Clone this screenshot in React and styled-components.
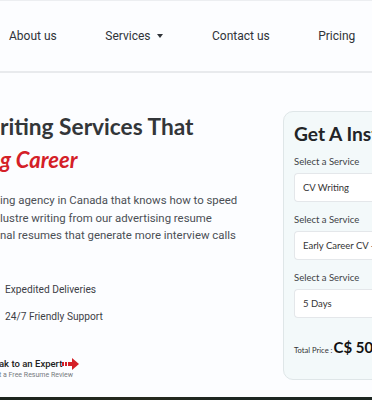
import React from "react";
import styled, { createGlobalStyle } from "styled-components";

const Global = createGlobalStyle`
  html, body { margin: 0; padding: 0; }
  body {
    background: #fcfdff;
    font-family: Roboto, "Liberation Sans", sans-serif;
    overflow: hidden;
  }
`;

const Page = styled.div`
  width: 372px;
  height: 400px;
  overflow: hidden;
  display: flex;
  flex-direction: column;
`;

const Nav = styled.nav`
  flex: none;
  border-top: 1px solid #eceef1;
  border-bottom: 2px solid #e8eaed;
  display: flex;
  align-items: center;
  gap: 48.5px;
  padding-left: 9px;
  box-sizing: border-box;
  height: 73px;
  padding-bottom: 1px;
`;

const NavItem = styled.a`
  font-size: 12px;
  color: #2f3338;
  white-space: nowrap;
  display: flex;
  align-items: center;
  gap: 7px;
`;

const Caret = styled.span`
  width: 0;
  height: 0;
  border-left: 3px solid transparent;
  border-right: 3px solid transparent;
  border-top: 4px solid #2f3338;
`;

const Hero = styled.section`
  flex: 1;
  display: flex;
  overflow: hidden;
`;

const Left = styled.div`
  width: 283px;
  flex: none;
  padding-top: 37px;
  overflow: hidden;
`;

const Title = styled.h1`
  margin: 0;
  font-family: Lato, sans-serif;
  font-weight: 700;
  font-size: 22.7px;
  line-height: 33px;
  color: #333639;
  white-space: nowrap;
`;

const Red = styled.em`
  color: #d42027;
  font-style: italic;
  font-size: 22px;
`;

const Para = styled.p`
  margin: 16px 0 0;
  font-size: 11.4px;
  line-height: 17.5px;
  color: #4b4f55;
  white-space: nowrap;
`;

const List = styled.ul`
  list-style: none;
  margin: 37px 0 0;
  padding: 0 0 0 5px;
  display: flex;
  flex-direction: column;
  gap: 12px;
`;

const ListItem = styled.li`
  font-size: 10.2px;
  line-height: 15px;
  color: #3c4046;
`;

const Cta = styled.div`
  margin-top: 34px;
  display: flex;
  flex-direction: column;
  gap: 1px;
`;

const CtaMain = styled.div`
  display: flex;
  align-items: center;
  font-size: 9.5px;
  font-weight: 500;
  color: #222;
  margin-left: -1px;
`;

const CtaSub = styled.div`
  font-size: 7px;
  color: #777b80;
  margin-left: -1px;
`;

const Card = styled.div`
  margin-top: 38px;
  width: 120px;
  height: 269px;
  flex: none;
  box-sizing: border-box;
  background: #f3f9fa;
  border: 1px solid #dfe6e8;
  border-radius: 10px;
  padding: 9px 0 0 10px;
  font-family: Lato, sans-serif;
`;

const CardTitle = styled.h2`
  margin: 0;
  font-size: 19.2px;
  font-weight: 700;
  color: #222427;
  white-space: nowrap;
  line-height: 26px;
`;

const Label = styled.div`
  margin-top: ${(p) => (p.$first ? "9px" : "12px")};
  font-size: 9.5px;
  color: #3d4145;
  line-height: 12px;
`;

const Field = styled.div`
  margin-top: 5px;
  height: 29px;
  box-sizing: border-box;
  background: #fff;
  border: 1px solid #e4e7ea;
  border-radius: 4px 0 0 4px;
  border-right: none;
  display: flex;
  align-items: center;
  padding-left: 8px;
  font-size: 9.5px;
  color: #333;
  white-space: nowrap;
  overflow: hidden;
`;

const Total = styled.div`
  margin-top: 20px;
  display: flex;
  align-items: baseline;
  gap: 1px;
  white-space: nowrap;
`;

const TotalLabel = styled.span`
  font-size: 7.6px;
  color: #333;
`;

const TotalValue = styled.span`
  font-size: 15px;
  font-weight: 700;
  color: #111;
`;

const Footer = styled.div`
  height: 3px;
  flex: none;
  background: linear-gradient(90deg, #1c241e 0%, #262a1e 40%, #1d2621 60%, #1d2621 100%);
`;

const Arrow = () => (
  <svg width="17" height="12" viewBox="0 0 17 12">
    <rect x="0" y="4" width="2" height="4" fill="#d42027" />
    <rect x="3" y="4" width="2" height="4" fill="#d42027" />
    <rect x="6" y="4" width="5" height="4" fill="#d42027" />
    <path d="M10 0 L17 6 L10 12 Z" fill="#d42027" />
  </svg>
);

export default function App() {
  return (
    <Page>
      <Global />
      <Nav>
        <NavItem>About us</NavItem>
        <NavItem>
          Services <Caret />
        </NavItem>
        <NavItem>Contact us</NavItem>
        <NavItem>Pricing</NavItem>
      </Nav>
      <Hero>
        <Left>
          <Title>
            riting Services That
            <br />
            <Red>g Career</Red>
          </Title>
          <Para>
            ing agency in Canada that knows how to speed
            <br />
            lustre writing from our advertising resume
            <br />
            nal resumes that generate more interview calls
          </Para>
          <List>
            <ListItem>Expedited Deliveries</ListItem>
            <ListItem>24/7 Friendly Support</ListItem>
          </List>
          <Cta>
            <CtaMain>
              ak to an Expert
              <Arrow />
            </CtaMain>
            <CtaSub>t a Free Resume Review</CtaSub>
          </Cta>
        </Left>
        <Card>
          <CardTitle>Get A Instant Quote</CardTitle>
          <Label $first>Select a Service</Label>
          <Field>CV Writing</Field>
          <Label>Select a Service</Label>
          <Field>Early Career CV - 0-5 Years</Field>
          <Label>Select a Service</Label>
          <Field>5 Days</Field>
          <Total>
            <TotalLabel>Total Price :</TotalLabel>
            <TotalValue>C$ 50</TotalValue>
          </Total>
        </Card>
      </Hero>
      <Footer />
    </Page>
  );
}
